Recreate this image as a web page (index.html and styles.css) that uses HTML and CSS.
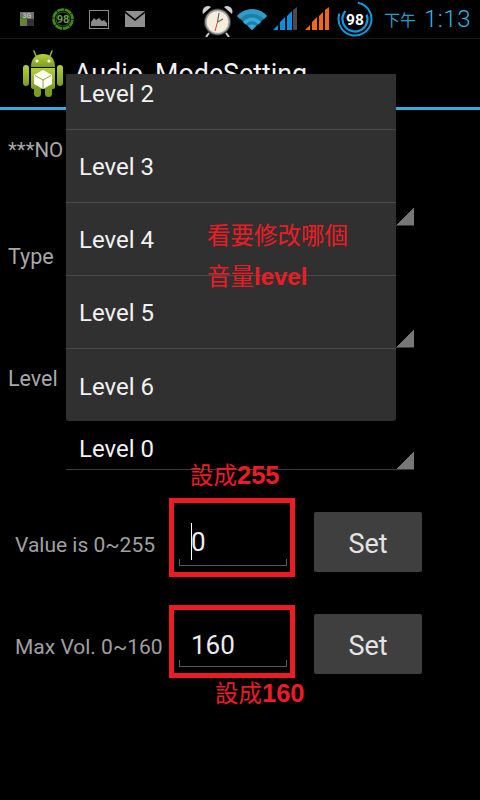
FILE: index.html
```html
<!DOCTYPE html>
<html lang="zh-Hant">
<head>
<meta charset="utf-8">
<title>Audio_ModeSetting</title>
<link rel="stylesheet" href="styles.css">
</head>
<body>
<div class="screen">
  <header class="statusbar">
    <svg class="ic-3g" width="14" height="14" viewBox="0 0 14 14"><rect width="14" height="14" fill="#6f6f6f"/><path d="M0 14 L10 5 H0Z" fill="#4f7f1c"/><path d="M0 14V7L8 7 1 14Z" fill="#5c8f20"/><rect y="7" x="7" width="7" height="7" fill="#333"/><text x="7" y="6.2" class="svg-3g" text-anchor="middle">3G</text></svg>
    <svg class="ic-ring" width="22" height="22" viewBox="0 0 22 22"><circle cx="11" cy="11" r="9.5" fill="none" stroke="#3f8a12" stroke-width="2.600"/><circle cx="11" cy="11" r="9.5" fill="none" stroke="#000" stroke-width="3" stroke-dasharray="0.6 7"/><circle cx="11" cy="11" r="7" fill="none" stroke="#2f6b10" stroke-width="1"/><text x="11" y="15" class="svg-98g" text-anchor="middle">98</text></svg>
    <svg class="ic-pic" width="20" height="19" viewBox="0 0 20 19"><rect x=".5" y=".5" width="19" height="18" fill="none" stroke="#8a8a8a"/><path d="M2 16V12L5 8 7 10 10 8 13 11 15 10 18 13V16Z" fill="#8a8a8a"/></svg>
    <svg class="ic-mail" width="20" height="16" viewBox="0 0 20 16"><path d="M0 0H20L10 8Z" fill="#8f8f8f"/><path d="M0 2L10 10 20 2V16H0Z" fill="#8f8f8f"/></svg>
    <svg class="ic-clock" width="33" height="33" viewBox="0 0 33 33">
      <path d="M2 10C0 5 5 0 10 3Z" fill="#cfcfcf"/><path d="M31 10C33 5 28 0 23 3Z" fill="#cfcfcf"/>
      <path d="M8 29L5 33M25 29L28 33" stroke="#cfcfcf" stroke-width="2"/>
      <circle cx="16.500" cy="18" r="13.500" fill="#3a3a3a"/><circle cx="16.500" cy="18" r="12.500" fill="#a0a0a0"/><circle cx="16.500" cy="18" r="10.800" fill="#f4efdc"/>
      <path d="M16.500 18L14 27" stroke="#e8362b" stroke-width="1"/><path d="M16.500 18L18 9" stroke="#666" stroke-width="1.200"/><path d="M16.500 18L22 15" stroke="#666" stroke-width="1.200"/>
    </svg>
    <svg class="ic-wifi" width="30" height="22" viewBox="0 0 30 22"><path d="M0 8C8 -1 22 -1 30 8L15 22Z" fill="#1f7fa6"/><path d="M0 8C8 -1 22 -1 30 8L27 11C20 4 10 4 3 11Z" fill="#2e9cc8"/><path d="M6 14C11 8 19 8 24 14L21.500 16.500C17 12 13 12 8.500 16.500Z" fill="#35a9d8"/><path d="M11 18C13 16 17 16 19 18L15 22Z" fill="#35a9d8"/></svg>
    <svg class="ic-sig1" width="24" height="23" viewBox="0 0 24 23"><path d="M0 23L5 18V23Z" fill="#0a8fe0"/><path d="M7 23V15L12 10V23Z" fill="#0a8fe0"/><path d="M14 23V9L19 4V23H14Z" fill="#0a8fe0"/><path d="M20 23V3L24 0V23Z" fill="#4a4a4a"/></svg>
    <svg class="ic-sig2" width="24" height="23" viewBox="0 0 24 23"><path d="M0 23L5 18V23Z" fill="#f26a10"/><path d="M7 23V15L12 10V23Z" fill="#f26a10"/><path d="M14 23V9L18 5V23Z" fill="#f26a10"/><path d="M20 23V3L24 0V23Z" fill="#f26a10"/></svg>
    <svg class="ic-batt" width="36" height="36" viewBox="0 0 36 36"><circle cx="18" cy="18" r="16.500" fill="none" stroke="#0e9be0" stroke-width="2" stroke-dasharray="80 24" transform="rotate(-80 18 18)"/><circle cx="18" cy="18" r="12.500" fill="none" stroke="#0e9be0" stroke-width="2.200" stroke-dasharray="52 27" transform="rotate(-20 18 18)"/><text x="18" y="23.500" class="svg-98w" text-anchor="middle">98</text></svg>
    <span class="ampm">下午</span>
    <span class="clock">1:13</span>
  </header>

  <div class="actionbar">
    <svg class="robot" width="40" height="47" viewBox="0 0 40 47">
      <defs><linearGradient id="g" x1="0" y1="0" x2="0" y2="1"><stop offset="0" stop-color="#b4cf3c"/><stop offset="1" stop-color="#7d9c1d"/></linearGradient></defs>
      <path d="M13 6L11 1M27 6L29 1" stroke="#9dbb2d" stroke-width="1.500" stroke-linecap="round"/>
      <path d="M8 17C8 8 13 4 20 4S32 8 32 17Z" fill="url(#g)"/>
      <circle cx="14" cy="11" r="1.600" fill="#fff"/><circle cx="26" cy="11" r="1.600" fill="#fff"/>
      <path d="M8 18H32V37Q32 39 29 39H11Q8 39 8 37Z" fill="url(#g)"/>
      <rect x="0" y="15" width="6" height="21" rx="3" fill="url(#g)"/><rect x="34" y="15" width="6" height="21" rx="3" fill="url(#g)"/>
      <rect x="11" y="36" width="7" height="11" rx="3.500" fill="#7d9c1d"/><rect x="22" y="36" width="7" height="11" rx="3.500" fill="#7d9c1d"/>
      <path d="M20 20L29 25V34L20 39 11 34V25Z" fill="#fff"/><path d="M20 30V39M12 25.500L20 30 28 25.500" stroke="#8aa826" stroke-width="1" fill="none"/>
    </svg>
    <span class="title">Audio_ModeSetting</span>
  </div>

  <main class="content">
    <section class="block block-note">
      <div class="label note">***NO</div>
      <div class="spinner"></div>
    </section>
    <section class="block">
      <div class="label">Type</div>
      <div class="spinner"></div>
    </section>
    <section class="block">
      <div class="label">Level</div>
      <div class="spinner"><span class="spinner-text">Level 0</span></div>
    </section>

    <div class="form-row row-a">
      <span class="form-label">Value is 0~255</span>
      <div class="field field-a"><span class="caret"></span><span class="field-text">0</span></div>
      <button class="btn">Set</button>
    </div>
    <div class="form-row row-b">
      <span class="form-label">Max Vol. 0~160</span>
      <div class="field field-b"><span class="field-text">160</span></div>
      <button class="btn">Set</button>
    </div>
  </main>

  <div class="menu">
    <ul class="menu-list">
      <li>Level 2</li>
      <li>Level 3</li>
      <li>Level 4</li>
      <li>Level 5</li>
      <li>Level 6</li>
    </ul>
  </div>

  <div class="note-red note-which">看要修改哪個<br>音量<b>level</b></div>
  <div class="note-red note-255">設成<b>255</b></div>
  <div class="note-red note-160">設成<b>160</b></div>
</div>
</body>
</html>
```
FILE: styles.css
```css
* { box-sizing: border-box; }
html, body { margin: 0; padding: 0; background: #000; }
.screen {
  position: relative;
  width: 480px;
  height: 800px;
  overflow: hidden;
  background: #000;
  font-family: Roboto, "Noto Sans CJK TC", sans-serif;
}

/* status bar */
.statusbar {
  display: flex;
  align-items: flex-start;
  height: 39px;
  border-bottom: 1px solid #161616;
}
.statusbar svg { flex: none; display: block; }
.ic-3g { margin: 12px 0 0 20px; }
.ic-ring { margin: 8px 0 0 18px; }
.ic-pic { margin: 10px 0 0 15px; }
.ic-mail { margin: 11px 0 0 16px; }
.ic-clock { margin: 4px 0 0 56px; }
.ic-wifi { margin: 8px 0 0 3px; }
.ic-sig1 { margin: 7px 0 0 6px; }
.ic-sig2 { margin: 7px 0 0 8px; }
.ic-batt { margin: 1px 0 0 8px; }
.svg-3g { font: 700 7px Roboto, sans-serif; fill: #bdbdbd; }
.svg-98g { font: 700 11px Roboto, sans-serif; fill: #6f9a55; }
.svg-98w { font: 700 15.500px Roboto, sans-serif; fill: #fff; }
.ampm { margin: 11px 0 0 11px; font-size: 16px; line-height: 20px; color: #2a9cc8; }
.clock { margin: 5px 0 0 8px; font-size: 24px; line-height: 28px; font-weight: 300; color: #33b5e5; letter-spacing: .5px; }

/* action bar */
.actionbar {
  display: flex;
  align-items: flex-start;
  height: 71px;
  border-bottom: 3px solid #2fb0de;
  padding: 11px 0 0 23px;
}
.robot { flex: none; display: block; }
.title { margin: 9px 0 0 11px; font-size: 26.800px; line-height: 30px; color: #f0f0f0; white-space: nowrap; }

/* spinners */
.block { display: block; height: 122px; padding-left: 8px; }
.block-note { height: 116px; }
.label { display: flex; align-items: center; height: 60px; font-size: 21.500px; color: #a8a8a8; }
.note { height: 80px; font-size: 20.500px; }
.block-note .spinner { height: 36px; }
.spinner {
  position: relative;
  display: flex;
  align-items: center;
  height: 62px;
  margin-left: 58px;
  width: 348px;
  padding: 20px 0 0 13px;
  border-bottom: 1px solid #3a3a3a;
}
.spinner::after {
  content: "";
  position: absolute;
  right: 0;
  bottom: 0;
  width: 18px;
  height: 18px;
  background: linear-gradient(135deg, transparent 50%, #777 50%);
}
.spinner-text { font-size: 24px; color: #f2f2f2; }

/* form rows */
.form-row { display: flex; align-items: flex-start; padding-left: 15px; }
.row-a { margin-top: 28px; }
.row-b { margin-top: 28px; }
.form-label { width: 154px; flex: none; font-size: 21px; line-height: 24px; color: #a0a0a0; white-space: nowrap; }
.row-a .form-label { margin-top: 35px; }
.row-b .form-label { margin-top: 30px; }
.field {
  position: relative;
  flex: none;
  display: flex;
  align-items: center;
  width: 126px;
  border: 5px solid #ed1c24;
  padding-left: 17px;
}
.field-a { height: 79px; padding-top: 8px; }
.field-b { height: 73px; padding-top: 6px; }
.field::after {
  content: "";
  position: absolute;
  left: 5px;
  right: 3px;
  bottom: 6px;
  height: 6px;
  border: 1px solid #5a5a5a;
  border-top: 0;
}
.field-text { font-size: 26px; line-height: 30px; color: #ececec; }
.caret { width: 1px; height: 37px; margin-right: -1px; background: #fff; }
.btn {
  flex: none;
  width: 108px;
  height: 60px;
  margin-left: 19px;
  border: 0;
  border-radius: 2px;
  background: #3f3f3f;
  color: #e4e4e4;
  font: 27px Roboto, sans-serif;
  padding: 3px 0 0;
}
.row-a .btn { margin-top: 14px; }
.row-b .btn { margin-top: 9px; }

/* dropdown */
.menu {
  position: absolute;
  left: 66px;
  top: 74px;
  width: 330px;
  height: 347px;
  overflow: hidden;
  background: #303030;
  border-radius: 0 0 3px 3px;
}
.menu-list { list-style: none; margin: -17px 0 0; padding: 0; }
.menu-list li {
  display: flex;
  align-items: center;
  height: 73px;
  padding: 2px 0 0 13px;
  font-size: 24px;
  color: #f2f2f2;
  border-bottom: 1px solid #4a4a4a;
}
.menu-list li:last-child { border-bottom: 0; }

/* red annotations */
.note-red {
  position: absolute;
  color: #ed1c24;
  font: 400 23.500px "Noto Sans CJK TC", sans-serif;
  white-space: nowrap;
}
.note-red b { font: 700 25.500px "Liberation Sans", sans-serif; }
.note-which b { font-size: 24px; }
.note-which { left: 207px; top: 214px; line-height: 41px; }
.note-255 { left: 190px; top: 457px; line-height: 34px; }
.note-160 { left: 215px; top: 675px; line-height: 34px; }
```
